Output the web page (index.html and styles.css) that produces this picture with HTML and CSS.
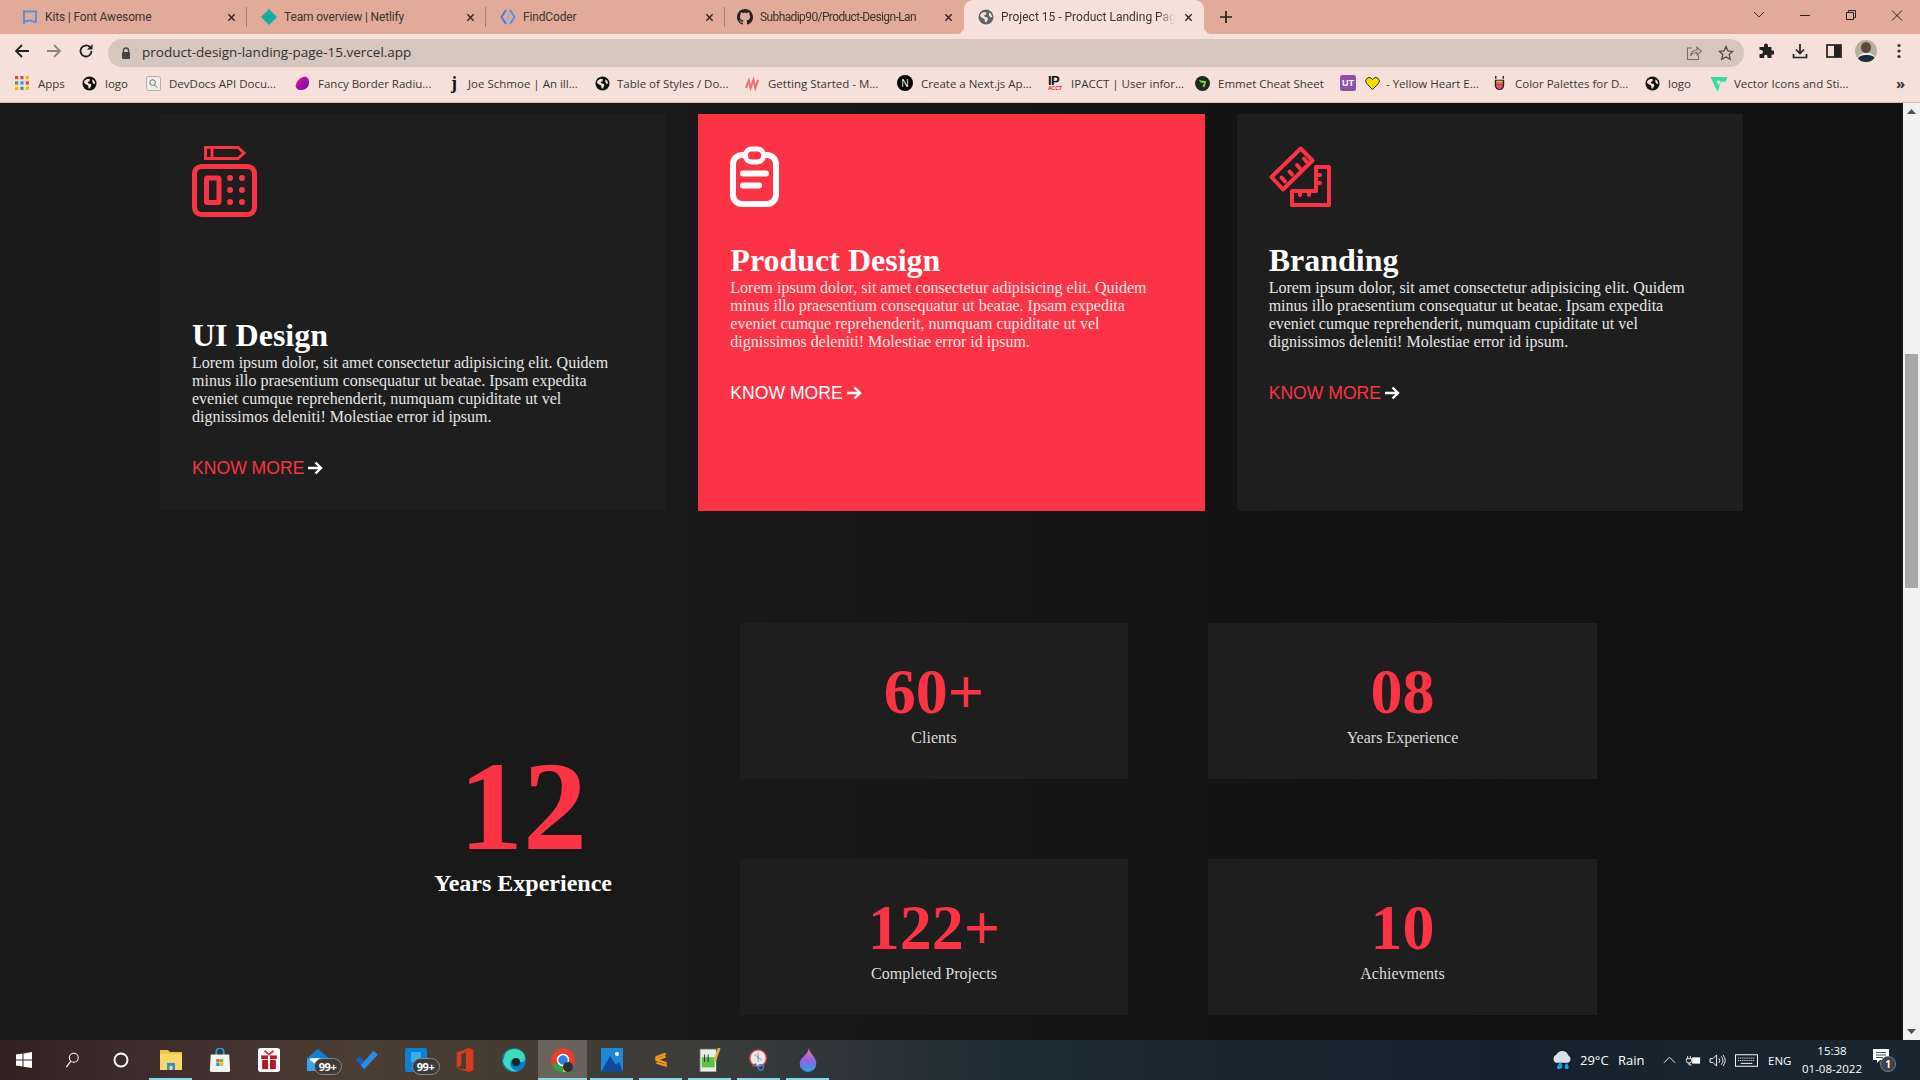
FILE: index.html
```html
<!DOCTYPE html>
<html lang="en">
<head>
<meta charset="utf-8">
<title>Project 15 - Product Landing Page</title>
<link rel="stylesheet" href="styles.css">
</head>
<body>
<svg class="defs" width="0" height="0" aria-hidden="true">
  <symbol id="globe" viewBox="0 0 16 16">
    <circle cx="8" cy="8" r="7.5" fill="currentColor"/>
    <path d="M3 4.500 6 3l2.500.5-.5 2-2 1 1 1.500 2.500.5.5 2-2 3-1-.5-.5-3L3.500 8.500 2 7z" fill="#f5e1da"/>
    <path d="M11 3.500l2 1.500 1.200 3-1.700.5-1.500-2z" fill="#f5e1da"/>
  </symbol>
  <symbol id="close" viewBox="0 0 10 10">
    <path d="M1.500 1.500l7 7M8.500 1.500l-7 7" stroke="currentColor" stroke-width="1.600" fill="none"/>
  </symbol>
</svg>

<header class="tabstrip">
  <div class="tab">
    <svg class="fav" viewBox="0 0 16 16"><path d="M2 1v14M2 2.500h12v10c-3 1-4-1-6-1-2.500 0-3 .8-6 1" fill="none" stroke="#5b8fd9" stroke-width="2"/></svg>
    <span class="tab-title">Kits | Font Awesome</span>
    <svg class="tab-x"><use href="#close"/></svg>
  </div>
  <div class="tab">
    <svg class="fav" viewBox="0 0 16 16"><path d="M8 0l8 8-8 8-8-8z" fill="#14ad9f"/></svg>
    <span class="tab-title">Team overview | Netlify</span>
    <svg class="tab-x"><use href="#close"/></svg>
  </div>
  <div class="tab">
    <svg class="fav" viewBox="0 0 16 16"><path d="M6 1 1.500 8 6 15" fill="none" stroke="#3f7fd6" stroke-width="1.800"/><path d="M10 1l4.500 7L10 15" fill="none" stroke="#4a90e2" stroke-width="1.800"/><path d="M9.500 2 6.500 14" stroke="#7fb2ee" stroke-width="1.200"/></svg>
    <span class="tab-title">FindCoder</span>
    <svg class="tab-x"><use href="#close"/></svg>
  </div>
  <div class="tab tab-before-active">
    <svg class="fav" viewBox="0 0 16 16"><path fill="#222" d="M8 0C3.580 0 0 3.580 0 8c0 3.540 2.290 6.530 5.470 7.590.4.070.55-.17.55-.38 0-.19-.01-.82-.01-1.490-2.010.37-2.530-.49-2.690-.94-.09-.23-.48-.94-.82-1.130-.28-.15-.68-.52-.01-.53.63-.01 1.080.58 1.230.82.72 1.210 1.870.87 2.330.66.07-.52.28-.87.51-1.070-1.780-.2-3.640-.89-3.640-3.950 0-.87.31-1.590.82-2.150-.08-.2-.36-1.020.08-2.120 0 0 .67-.21 2.200.82.64-.18 1.320-.27 2-.27.68 0 1.360.09 2 .27 1.530-1.040 2.200-.82 2.200-.82.44 1.100.16 1.920.08 2.120.51.56.82 1.270.82 2.150 0 3.070-1.870 3.750-3.650 3.950.29.25.54.73.54 1.480 0 1.070-.01 1.930-.01 2.200 0 .21.15.46.55.38A8.013 8.013 0 0016 8c0-4.420-3.580-8-8-8z"/></svg>
    <span class="tab-title tab-fade tab-tight">Subhadip90/Product-Design-Lan</span>
    <svg class="tab-x"><use href="#close"/></svg>
  </div>
  <div class="tab tab-active">
    <svg class="fav fav-grey"><use href="#globe"/></svg>
    <span class="tab-title tab-fade">Project 15 - Product Landing Pag</span>
    <svg class="tab-x"><use href="#close"/></svg>
  </div>
  <svg class="newtab" viewBox="0 0 12 12"><path d="M6 0v12M0 6h12" stroke="#222" stroke-width="1.700"/></svg>
  <div class="win-controls">
    <svg class="win-btn" viewBox="0 0 46 20"><path d="M18 7l5 5 5-5" fill="none" stroke="#333" stroke-width="1"/></svg>
    <svg class="win-btn" viewBox="0 0 46 20"><path d="M18 10.500h10" stroke="#222" stroke-width="1"/></svg>
    <svg class="win-btn" viewBox="0 0 46 20"><path d="M18.500 7.500h7v7h-7zM20.500 7.500v-2h7v7h-2" fill="none" stroke="#222" stroke-width="1"/></svg>
    <svg class="win-btn" viewBox="0 0 46 20"><path d="M18 5.500l10 10M28 5.500l-10 10" stroke="#222" stroke-width="1"/></svg>
  </div>
</header>

<nav class="toolbar">
  <svg class="tool tool-back" viewBox="0 0 16 16"><path d="M15 8H2M8 2 2 8l6 6" fill="none" stroke="#222" stroke-width="1.800"/></svg>
  <svg class="tool tool-fwd" viewBox="0 0 16 16"><path d="M1 8h13M8 2l6 6-6 6" fill="none" stroke="#8f8581" stroke-width="1.800"/></svg>
  <svg class="tool tool-reload" viewBox="0 0 16 16"><path d="M13.500 8A5.500 5.500 0 1 1 11.800 4" fill="none" stroke="#222" stroke-width="1.800"/><path d="M14.500 1v5.500H9z" fill="#222"/></svg>
  <div class="omnibox">
    <svg class="lock" viewBox="0 0 10 12"><path d="M2.500 5V3.500a2.500 2.500 0 0 1 5 0V5" fill="none" stroke="#444" stroke-width="1.300"/><rect x="1" y="5" width="8" height="7" rx="1" fill="#444"/></svg>
    <span class="url">product-design-landing-page-15.vercel.app</span>
    <svg class="omni-icon omni-share" viewBox="0 0 16 16"><path d="M6 3H1.500v11.500h11V10" fill="none" stroke="#756d69" stroke-width="1.100"/><path d="M4.500 11c.5-4 3-6 6.500-6V2l4.500 4.500L11 10V7.500c-3 0-5 1-6.500 3.500z" fill="none" stroke="#756d69" stroke-width="1.100"/></svg>
    <svg class="omni-icon" viewBox="0 0 16 16"><path d="M8 1.500l2 4.400 4.700.5-3.500 3.200 1 4.700L8 11.900l-4.200 2.400 1-4.700L1.300 6.400 6 5.900z" fill="none" stroke="#4f4845" stroke-width="1.300"/></svg>
  </div>
  <svg class="tool tool-ext" viewBox="0 0 16 16"><path d="M6 2.500a2 2 0 0 1 4 0V4h3.500v3.500H15a2 2 0 0 1 0 4h-1.500V15H9.500v-1.500a1.700 1.700 0 0 0-3.400 0V15H1.500v-4H3a2 2 0 0 0 0-4H1.500V4H6z" fill="#222"/></svg>
  <svg class="tool tool-dl" viewBox="0 0 16 16"><path d="M8 1v9M4 6.500 8 10.500l4-4" fill="none" stroke="#222" stroke-width="1.700"/><path d="M1.500 11v3.500h13V11" fill="none" stroke="#222" stroke-width="1.700"/></svg>
  <svg class="tool tool-side" viewBox="0 0 16 16"><rect x="1" y="2" width="14" height="12" fill="none" stroke="#222" stroke-width="1.700"/><rect x="8" y="2" width="7" height="12" fill="#222"/></svg>
  <span class="avatar"><span class="avatar-face"></span><span class="avatar-shirt"></span></span>
  <svg class="tool tool-menu" viewBox="0 0 4 16"><circle cx="2" cy="2.500" r="1.600" fill="#333"/><circle cx="2" cy="8" r="1.600" fill="#333"/><circle cx="2" cy="13.500" r="1.600" fill="#333"/></svg>
</nav>

<nav class="bookmarks">
  <a class="bm"><svg class="bm-ic" viewBox="0 0 14 14"><g><rect x="0" y="0" width="3" height="3" fill="#e8453c"/><rect x="5" y="0" width="3" height="3" fill="#e8453c"/><rect x="10" y="0" width="3" height="3" fill="#f7b500"/><rect x="0" y="5" width="3" height="3" fill="#34a853"/><rect x="5" y="5" width="3" height="3" fill="#4285f4"/><rect x="10" y="5" width="3" height="3" fill="#e8453c"/><rect x="0" y="10" width="3" height="3" fill="#f7b500"/><rect x="5" y="10" width="3" height="3" fill="#34a853"/><rect x="10" y="10" width="3" height="3" fill="#f7b500"/></g></svg>Apps</a>
  <a class="bm"><svg class="bm-ic"><use href="#globe"/></svg>logo</a>
  <a class="bm"><svg class="bm-ic" viewBox="0 0 16 16"><rect x=".5" y=".5" width="15" height="15" rx="2" fill="#eee" stroke="#aaa"/><circle cx="7" cy="7" r="3" fill="none" stroke="#666"/><path d="M9 9.500l3 3" stroke="#666"/></svg>DevDocs API Docu...</a>
  <a class="bm"><svg class="bm-ic" viewBox="0 0 16 16"><defs><linearGradient id="fbr" x1="0" y1="0" x2="1" y2="1"><stop offset="0" stop-color="#e0109a"/><stop offset="1" stop-color="#6a0fb0"/></linearGradient></defs><path d="M9 1c4-1 6 2 6 6 0 5-4 8-8 8-5 0-7-3-6-6C2 5 5 2 9 1z" fill="url(#fbr)"/></svg>Fancy Border Radiu...</a>
  <a class="bm"><span class="bm-letter">j</span>Joe Schmoe | An ill...</a>
  <a class="bm"><svg class="bm-ic bm-ic-far"><use href="#globe"/></svg>Table of Styles / Do...</a>
  <a class="bm"><svg class="bm-ic" viewBox="0 0 16 16"><path d="M1 13 4 5l2 8 3-9 2 9 3-9" fill="none" stroke="#f36d7c" stroke-width="2.200"/></svg>Getting Started - M...</a>
  <a class="bm"><span class="bm-next">N</span>Create a Next.js Ap...</a>
  <a class="bm"><span class="bm-ip">IP<small>ACCT</small></span>IPACCT | User infor...</a>
  <a class="bm"><svg class="bm-ic" viewBox="0 0 16 16"><circle cx="8" cy="8" r="8" fill="#1b2a1f"/><path d="M4 4.500l8 1-2 7-2-2 2-3-4-.5z" fill="#8fd14f"/></svg>Emmet Cheat Sheet</a>
  <a class="bm"><span class="bm-ut">UT</span></a>
  <a class="bm"><svg class="bm-ic bm-ic-near" viewBox="0 0 16 16"><path d="M8 14.500 1.800 8a3.800 3.800 0 0 1 0-5.200 3.700 3.700 0 0 1 5.300 0L8 3.700l.9-.9a3.700 3.700 0 0 1 5.300 0 3.800 3.800 0 0 1 0 5.200z" fill="#f7e000" stroke="#222"/></svg>- Yellow Heart E...</a>
  <a class="bm"><svg class="bm-ic" viewBox="0 0 16 16"><path d="M3 4h10v6a5 5 0 0 1-10 0z" fill="#222"/><path d="M4.500 5h7v2h-7z" fill="#f5b942"/><path d="M4.500 7h7v2h-7z" fill="#f2743a"/><path d="M4.500 9h7v2c0 1.500-2 3-3.500 3S4.500 12.500 4.500 11z" fill="#e8467c"/><path d="M4 0v3M12 0v3" stroke="#222" stroke-width="1.500"/></svg>Color Palettes for D...</a>
  <a class="bm"><svg class="bm-ic"><use href="#globe"/></svg>logo</a>
  <a class="bm"><svg class="bm-ic bm-vec" viewBox="0 0 18 16"><path d="M0 1h18l-2 5h-5l-1 3-2 7h-1z" fill="#34dba0"/><path d="M6 5h5l-2 5z" fill="#f5e1da"/></svg>Vector Icons and Sti...</a>
  <a class="bm bm-more">»</a>
</nav>

<div class="viewport">
  <main class="page">
    <section class="services">
      <article class="card">
        <div class="card-icon card-icon-tall">
          <svg class="ic-ui" viewBox="0 0 65 71" fill="none" stroke="#fc3345">
            <rect x="2.500" y="20.500" width="60" height="48" rx="7" stroke-width="5"/>
            <rect x="14.500" y="32" width="12.500" height="24.500" rx="1" stroke-width="5"/>
            <path d="M13.500 1.500H46l6 5.500-6 5.500H13.500zM20 1.500v11" stroke-width="3"/>
            <g fill="#fc3345" stroke="none"><circle cx="38" cy="32" r="3"/><circle cx="50" cy="32" r="3"/><circle cx="38" cy="44" r="3"/><circle cx="50" cy="44" r="3"/><circle cx="38" cy="56" r="3"/><circle cx="50" cy="56" r="3"/></g>
          </svg>
        </div>
        <h2 class="card-title">UI Design</h2>
        <p class="card-text">Lorem ipsum dolor, sit amet consectetur adipisicing elit. Quidem minus illo praesentium consequatur ut beatae. Ipsam expedita eveniet cumque reprehenderit, numquam cupiditate ut vel dignissimos deleniti! Molestiae error id ipsum.</p>
        <a class="more"><span>KNOW MORE</span><svg class="more-arrow" viewBox="0 0 15 14"><path d="M0 7h13M7.500 1.500 13 7l-5.500 5.500" fill="none" stroke="#fff" stroke-width="2.400"/></svg></a>
      </article>
      <article class="card card-hot">
        <div class="card-icon">
          <svg class="ic-clip" viewBox="0 0 49 61" fill="none" stroke="#fff" stroke-linecap="round">
            <rect x="3" y="9" width="43" height="49" rx="9" stroke-width="6"/>
            <rect x="15.500" y="3" width="18" height="13" rx="6" stroke-width="5" fill="#fc3345"/>
            <path d="M13 27.500h23M13 39.500h16" stroke-width="6"/>
          </svg>
        </div>
        <h2 class="card-title">Product Design</h2>
        <p class="card-text">Lorem ipsum dolor, sit amet consectetur adipisicing elit. Quidem minus illo praesentium consequatur ut beatae. Ipsam expedita eveniet cumque reprehenderit, numquam cupiditate ut vel dignissimos deleniti! Molestiae error id ipsum.</p>
        <a class="more"><span>KNOW MORE</span><svg class="more-arrow" viewBox="0 0 15 14"><path d="M0 7h13M7.500 1.500 13 7l-5.500 5.500" fill="none" stroke="#fff" stroke-width="2.400"/></svg></a>
      </article>
      <article class="card">
        <div class="card-icon">
          <svg class="ic-rule" viewBox="0 0 62 61" fill="none" stroke="#fc3345" stroke-width="4" stroke-linejoin="round" stroke-linecap="round">
            <path d="M31.700 2.500 43.500 14.500 14 43.500 2.500 31z"/>
            <path d="M12.500 31.500l3.500 4M20.500 25.500l2.500 3M28 19l3.500 4M35 12.500l2.500 3"/>
            <path d="M47 21h13v38H23V45h24z"/>
            <path d="M47 29h4M47 37h4M31 45v4M40 45v4"/>
          </svg>
        </div>
        <h2 class="card-title">Branding</h2>
        <p class="card-text">Lorem ipsum dolor, sit amet consectetur adipisicing elit. Quidem minus illo praesentium consequatur ut beatae. Ipsam expedita eveniet cumque reprehenderit, numquam cupiditate ut vel dignissimos deleniti! Molestiae error id ipsum.</p>
        <a class="more"><span>KNOW MORE</span><svg class="more-arrow" viewBox="0 0 15 14"><path d="M0 7h13M7.500 1.500 13 7l-5.500 5.500" fill="none" stroke="#fff" stroke-width="2.400"/></svg></a>
      </article>
    </section>

    <section class="stats">
      <div class="hero-stat">
        <div class="hero-num">12</div>
        <div class="hero-label">Years Experience</div>
      </div>
      <div class="stat-grid">
        <div class="stat"><div class="stat-num">60+</div><div class="stat-label">Clients</div></div>
        <div class="stat"><div class="stat-num">08</div><div class="stat-label">Years Experience</div></div>
        <div class="stat"><div class="stat-num">122+</div><div class="stat-label">Completed Projects</div></div>
        <div class="stat"><div class="stat-num">10</div><div class="stat-label">Achievments</div></div>
      </div>
    </section>
  </main>
  <aside class="scrollbar">
    <svg class="sb-btn" viewBox="0 0 17 17"><path d="M8.500 6 13 11H4z" fill="#505050"/></svg>
    <div class="sb-track"><div class="sb-thumb"></div></div>
    <svg class="sb-btn" viewBox="0 0 17 17"><path d="M8.500 11 13 6H4z" fill="#505050"/></svg>
  </aside>
</div>

<footer class="taskbar">
  <div class="task-left">
    <span class="tb tb-sys"><svg class="tb-ic" viewBox="0 0 16 16"><path d="M0 2.500 6.500 1.600v6H0zM7.500 1.400 16 0v7.600H7.500zM0 8.500h6.500v6L0 13.600zM7.500 8.500H16V16l-8.500-1.300z" fill="#fff"/></svg></span>
    <span class="tb tb-sys"><svg class="tb-ic" viewBox="0 0 16 18"><circle cx="10" cy="6.500" r="5" fill="none" stroke="#fff" stroke-width="1.200"/><path d="M6.500 10.500 1.500 17" stroke="#fff" stroke-width="1.300"/></svg></span>
    <span class="tb tb-cortana"><svg class="tb-ic" viewBox="0 0 16 16"><circle cx="8" cy="8" r="6.500" fill="none" stroke="#fff" stroke-width="2"/></svg></span>
    <span class="tb tb-on"><svg class="tb-ic tb-lg" viewBox="0 0 22 24"><path d="M0 2h8l2 2h12v18H0z" fill="#f6c445"/><path d="M0 6h22v16H0z" fill="#fbd768"/><path d="M7 22v-7h8v7h-2.500v-4h-3v4z" fill="#2d8fd5"/></svg></span>
    <span class="tb"><svg class="tb-ic tb-lg" viewBox="0 0 22 26"><path d="M7 8V4a4 4 0 0 1 8 0v4" fill="none" stroke="#1aa4e0" stroke-width="2"/><path d="M1 7h20l1 17a2 2 0 0 1-2 2H2a2 2 0 0 1-2-2z" fill="#f4f4f4"/><rect x="7" y="12" width="3.500" height="3.500" fill="#f25022"/><rect x="11" y="12" width="3.500" height="3.500" fill="#7fba00"/><rect x="7" y="16" width="3.500" height="3.500" fill="#00a4ef"/><rect x="11" y="16" width="3.500" height="3.500" fill="#ffb900"/></svg></span>
    <span class="tb"><svg class="tb-ic tb-lg" viewBox="0 0 24 26"><rect width="24" height="26" rx="3" fill="#fff"/><rect x="3.500" y="8" width="17" height="4" fill="#b51a22"/><rect x="4.500" y="13" width="15" height="10" fill="#b51a22"/><path d="M11 8h2v15h-2z" fill="#fff"/><path d="M12 7 7 3M12 7l5-4" stroke="#d9323c" stroke-width="2"/></svg></span>
    <span class="tb"><span class="badged"><svg class="tb-ic tb-lg" viewBox="0 0 24 24"><path d="M0 10 12 0l12 10v14H0z" fill="#0f7fd6"/><path d="M3 10h18v8H3z" fill="#fff"/><path d="M0 10l12 8 12-8v14H0z" fill="#35a6ee"/></svg><span class="count">99+</span></span></span>
    <span class="tb"><svg class="tb-ic tb-lg" viewBox="0 0 24 20"><path d="M0 10l4-4 5 5-4 5z" fill="#195abd"/><path d="M5 16 19 0l5 4L9 20z" fill="#2b8be8"/></svg></span>
    <span class="tb"><span class="badged"><svg class="tb-ic tb-lg" viewBox="0 0 22 24"><rect width="22" height="24" rx="2" fill="#0f7fd6"/><rect x="6" y="4" width="10" height="10" fill="#38aef0"/></svg><span class="count">99+</span></span></span>
    <span class="tb"><svg class="tb-ic tb-lg" viewBox="0 0 18 26"><path d="M0 5 13 0l5 2v22l-5 2-13-4 10 1V4L5 7v12l-5 3z" fill="#d83b20"/></svg></span>
    <span class="tb"><svg class="tb-ic tb-xl" viewBox="0 0 24 24"><circle cx="12" cy="12" r="12" fill="#0c7cc8"/><path d="M3 6c4-6 14-7 19 0 2 4 1 8-2 8-4 0-3-3-7-3-5 0-6 5-3 9 1 2 4 3 7 3-7 2-15-3-16-10z" fill="#3ddbb8"/><circle cx="14" cy="14" r="4" fill="#15252c"/></svg></span>
    <span class="tb tb-run"><svg class="tb-ic tb-xl" viewBox="0 0 24 24"><circle cx="12" cy="12" r="12" fill="#e5402f"/><path d="M12 12 1.500 18A12 12 0 0 0 12 24z" fill="#2aa84e"/><path d="M12 12l10.400 6A12 12 0 0 1 12 24z" fill="#f7c53f"/><circle cx="12" cy="12" r="5.500" fill="#2f7ee3" stroke="#fff" stroke-width="1.500"/><circle cx="17" cy="19" r="5" fill="#2c3035"/></svg></span>
    <span class="tb tb-on"><svg class="tb-ic tb-lg" viewBox="0 0 22 24"><rect width="22" height="24" fill="#1d88d8"/><path d="M0 24 9 8l6 9 3-3 4 10z" fill="#114a9a"/><circle cx="16" cy="6" r="2" fill="#fff"/></svg></span>
    <span class="tb tb-on"><svg class="tb-ic tb-lg" viewBox="0 0 24 24"><rect width="24" height="24" rx="3" fill="#3d3d3d"/><path d="M17 5 7 9v3l10 3v3L7 15M7 12l10-4" fill="none" stroke="#f79a0f" stroke-width="2.500"/></svg></span>
    <span class="tb tb-on"><svg class="tb-ic tb-lg" viewBox="0 0 22 26"><rect y="1" width="18" height="25" fill="#e9efe5" stroke="#555"/><rect x="2" y="10" width="14" height="11" fill="#5cc04b"/><path d="M5 7v8M9 7v8" stroke="#222"/><path d="M21 0l-5 14" stroke="#e0b048" stroke-width="3"/></svg></span>
    <span class="tb tb-on"><svg class="tb-ic tb-lg" viewBox="0 0 24 24"><circle cx="11" cy="10" r="9" fill="#e9e9e9" stroke="#d9424a" stroke-width="1.500"/><path d="M11 4v10M7 6l8 6" stroke="#889"/><circle cx="14" cy="20" r="3" fill="none" stroke="#2b8be8" stroke-width="1.500"/><path d="M5 19l4-3" stroke="#666" stroke-width="2"/></svg></span>
    <span class="tb tb-on"><svg class="tb-ic tb-lg" viewBox="0 0 18 26"><defs><linearGradient id="drop" x1="0" y1="0" x2="0" y2="1"><stop offset="0" stop-color="#f27ca0"/><stop offset=".5" stop-color="#9b5de5"/><stop offset="1" stop-color="#1ea7e8"/></linearGradient></defs><path d="M10 0c1 6 8 10 8 17a9 9 0 0 1-18 0C0 10 9 8 10 0z" fill="url(#drop)"/></svg></span>
  </div>
  <div class="tray">
    <svg class="tr-weather" viewBox="0 0 24 22"><path d="M5 14a5 5 0 0 1 1-9 7 7 0 0 1 13 1 4.500 4.500 0 0 1 0 8z" fill="#d7e3ea"/><path d="M8 21c-2 0-2-3 0-5l2-3 2 3c1 3 0 5-4 5zM17 21c-2 0-3-2-1-5l1-2 2 3c1 3 0 4-2 4z" fill="#1f9fe8"/></svg>
    <span class="tr-text">29°C</span>
    <span class="tr-text">Rain</span>
    <svg class="tr-ic" viewBox="0 0 14 8"><path d="M1 7l6-6 6 6" fill="none" stroke="#fff"/></svg>
    <svg class="tr-ic tr-bat" viewBox="0 0 18 12"><path d="M3 1v3M6 1v3M1.500 4h6v2a3 3 0 0 1-6 0zM4.500 8v3h3" fill="none" stroke="#fff"/><rect x="8" y="2.500" width="9" height="7" fill="#fff"/></svg>
    <svg class="tr-ic tr-vol" viewBox="0 0 18 14"><path d="M1 5h3l4-4v12L4 9H1z" fill="none" stroke="#fff"/><path d="M10.500 4.500a4 4 0 0 1 0 5M13 2.500a7 7 0 0 1 0 9M15 1a10 10 0 0 1 0 12" fill="none" stroke="#fff"/></svg>
    <svg class="tr-ic tr-kb" viewBox="0 0 24 13"><rect x=".5" y=".5" width="23" height="12" fill="none" stroke="#fff"/><path d="M3 4h18M3 6.500h18" stroke="#fff" stroke-dasharray="1 1"/><path d="M6 9.500h12" stroke="#fff"/></svg>
    <span class="tr-text tr-eng">ENG</span>
    <div class="clock"><span>15:38</span><span>01-08-2022</span></div>
    <span class="notif"><svg class="notif-ic" viewBox="0 0 16 15"><path d="M0 0h16v11H7l-3 3v-3H0z" fill="#fff"/><path d="M3 3.500h10M3 6h10M3 8.500h7" stroke="#1a2733" stroke-width=".8"/></svg><span class="notif-count">1</span></span>
  </div>
</footer>
</body>
</html>
```
FILE: styles.css
```css
* { box-sizing: border-box; }
html, body { height: 100%; }
body {
  margin: 0;
  display: flex;
  flex-direction: column;
  overflow: hidden;
  font-family: "Liberation Serif", serif;
  background: #181818;
}
.defs { position: absolute; }

/* browser chrome */
.tabstrip {
  height: 34px;
  flex: none;
  display: flex;
  padding-left: 8px;
  background: #e2aa98;
  font: 12px/34px Roboto, sans-serif;
  color: #3a3532;
}
.tab {
  position: relative;
  width: 239px;
  height: 34px;
  display: flex;
  align-items: center;
  padding: 0 11px 0 14px;
}
.tab::after {
  content: "";
  position: absolute;
  right: 0;
  top: 7px;
  bottom: 7px;
  width: 1px;
  background: #a5806f;
}
.tab-before-active { padding-left: 12px; }
.tab-before-active::after, .tab-active::after { display: none; }
.tab-active {
  width: 240px;
  background: #f5e1da;
  border-radius: 9px 9px 0 0;
}
.tab-active::before {
  content: "";
  position: absolute;
  left: -8px;
  right: -8px;
  bottom: 0;
  height: 8px;
  background:
    radial-gradient(circle at 0 0, transparent 8px, #f5e1da 8.5px) 0 0 / 8px 8px no-repeat,
    radial-gradient(circle at 100% 0, transparent 8px, #f5e1da 8.5px) 100% 0 / 8px 8px no-repeat;
}
.fav { width: 16px; height: 16px; flex: none; margin-right: 7px; }
.fav-grey { color: #5f6368; }
.tab-title {
  flex: 1;
  min-width: 0;
  white-space: nowrap;
  letter-spacing: -.15px;
}
.tab-fade {
  letter-spacing: 0;
  -webkit-mask-image: linear-gradient(90deg, #000 90%, transparent);
  mask-image: linear-gradient(90deg, #000 90%, transparent);
}
.tab-tight { letter-spacing: -.6px; }
.tab-x { width: 9px; height: 9px; flex: none; margin-left: 9px; color: #2a2a2a; }
.newtab { width: 12px; height: 12px; margin: 11px 0 0 16px; flex: none; }
.win-controls { margin-left: auto; display: flex; align-items: flex-start; padding: 5px 0 0; }
.win-btn { width: 46px; height: 20px; }

.toolbar {
  height: 34px;
  flex: none;
  display: flex;
  align-items: center;
  background: #f5e1da;
}
.tool { width: 16px; height: 16px; flex: none; }
.tool-back { margin-left: 14px; }
.tool-fwd { margin-left: 16px; }
.tool-reload { margin-left: 16px; }
.omnibox {
  width: 1636px;
  height: 28px;
  margin: 4px 0 0 14px;
  flex: none;
  display: flex;
  align-items: center;
  padding: 0 10px 0 13px;
  border-radius: 14px;
  background: #d6c6be;
}
.lock { width: 10px; height: 12px; flex: none; }
.url {
  margin: -2px 0 0 11px;
  font: 13.500px "Open Sans", sans-serif;
  color: #33302e;
}
.omni-icon { width: 16px; height: 16px; margin-left: 16px; flex: none; }
.omni-share { margin-left: auto; }
.tool-ext { margin-left: 14px; }
.tool-dl { margin-left: 18px; }
.tool-side { margin-left: 18px; }
.avatar {
  position: relative;
  width: 22px;
  height: 22px;
  margin-left: 13px;
  border-radius: 50%;
  overflow: hidden;
  flex: none;
  background: #b5b09b;
}
.avatar-face { position: absolute; left: 6px; top: 2px; width: 10px; height: 11px; border-radius: 50%; background: #5d4a3d; }
.avatar-shirt { position: absolute; left: 2px; top: 13px; width: 19px; height: 10px; border-radius: 8px 8px 0 0; background: #1e2b3a; border-top: 2px solid #e8eef2; }
.tool-menu { width: 4px; margin-left: 20px; }

.bookmarks {
  height: 35px;
  flex: none;
  display: grid;
  grid-template-columns: 67px 64px 149px 156px 144px 150px 152px 151px 147px 145px 25px 127px 153px 65px 186px 20px;
  align-items: center;
  padding: 0 0 4px 15px;
  background: #f5e1da;
  border-bottom: 1px solid #cdbfb8;
  font: 11.500px "Open Sans", sans-serif;
  color: #3a3532;
  white-space: nowrap;
}
.bm { display: flex; align-items: center; color: #3a3532; }
.bm-ic { width: 15px; height: 15px; flex: none; margin-right: 8px; color: #111; }
.bm-ic-far { margin-right: 7px; }
.bm-ic-near { margin-right: 6px; }
.bm-vec { width: 18px; margin-right: 6px; }
.bm-letter {
  width: 17px;
  flex: none;
  font: bold 18px "Liberation Serif", serif;
  color: #111;
  line-height: 15px;
}
.bm-next {
  width: 16px;
  height: 16px;
  margin-right: 8px;
  flex: none;
  border-radius: 50%;
  background: #000;
  color: #fff;
  font-size: 10px;
  line-height: 16px;
  text-align: center;
}
.bm-ip {
  width: 16px;
  margin-right: 7px;
  flex: none;
  font: bold 13px/10px "Liberation Sans", sans-serif;
  color: #111;
  letter-spacing: -.5px;
}
.bm-ip small { display: block; font-size: 5px; line-height: 5px; color: #d8202c; letter-spacing: 0; }
.bm-ut {
  width: 16px;
  height: 16px;
  border-radius: 2px;
  background: #8c52a6;
  color: #fff;
  font: bold 9px/16px "Liberation Sans", sans-serif;
  text-align: center;
}
.bm-more { font-size: 15px; font-weight: 700; color: #333; }

/* page */
.viewport {
  flex: 1;
  min-height: 0;
  display: flex;
  overflow: hidden;
}
.page {
  flex: 1;
  min-width: 0;
  padding-top: 11px;
  background: linear-gradient(90deg, #191919 0, #191919 35%, #111 80%, #111 100%);
  color: #fff;
}
.services {
  display: grid;
  grid-template-columns: repeat(3, 1fr);
  gap: 32px;
  padding: 0 160px;
}
.card {
  padding: 32px;
  min-height: 397px;
  background: #1e1e1e;
}
.card-hot { background: #fc3345; }
.card-icon { height: 96px; }
.card-icon-tall { height: 171px; }
.card-icon svg { display: block; }
.ic-ui { width: 65px; height: 71px; }
.ic-clip { width: 49px; height: 61px; }
.ic-rule { width: 62px; height: 61px; }
.card-title {
  margin: 0;
  font-size: 32px;
  font-weight: 700;
  line-height: 37px;
  color: #fff;
}
.card-text {
  margin: 0;
  font-size: 16px;
  line-height: 18px;
  color: #e6e6e6;
}
.card-hot .card-text { color: #f6e9ea; }
.more {
  display: flex;
  align-items: center;
  margin-top: 32px;
  font: 17.600px/20px "Liberation Sans", sans-serif;
  color: #fc3345;
}
.card-hot .more { color: #fff; }
.more-arrow { width: 15px; height: 14px; margin-left: 4px; }

.stats {
  display: flex;
  align-items: center;
  margin-top: 112px;
  padding-left: 306px;
}
.hero-stat { width: 434px; text-align: center; }
.hero-num {
  font-size: 128px;
  font-weight: 700;
  line-height: 128px;
  color: #fc3345;
}
.hero-label {
  margin-top: -1px;
  font-size: 24px;
  font-weight: 700;
  line-height: 28px;
  color: #fff;
}
.stat-grid {
  display: grid;
  grid-template-columns: 388px 389px;
  grid-auto-rows: 156px;
  gap: 80px;
}
.stat {
  padding-top: 33px;
  text-align: center;
  background: #1e1e1e;
}
.stat-num {
  font-size: 64px;
  font-weight: 700;
  line-height: 71px;
  color: #fc3345;
}
.stat-label {
  margin-top: 2px;
  font-size: 16px;
  line-height: 18px;
  color: #dcdcdc;
}

/* scrollbar */
.scrollbar {
  width: 17px;
  flex: none;
  display: flex;
  flex-direction: column;
  background: #f1f1f1;
}
.sb-btn { width: 17px; height: 17px; flex: none; }
.sb-track { flex: 1; padding: 234px 2px 0; }
.sb-thumb { height: 234px; background: #a8a8a8; }

/* taskbar */
.taskbar {
  height: 40px;
  flex: none;
  display: flex;
  justify-content: space-between;
  background: linear-gradient(90deg, #33211f 0, #3d2a2c 120px, #4b3d33 350px, #453c31 520px, #3a3c3a 720px, #1e2c36 1000px, #15212c 1500px, #1a2630 100%);
  color: #fff;
}
.task-left { display: flex; }
.tb {
  position: relative;
  width: 49px;
  height: 40px;
  display: flex;
  align-items: center;
  justify-content: center;
}
.tb-sys { width: 48px; }
.tb-cortana { width: 50px; }
.tb-on::after, .tb-run::after {
  content: "";
  position: absolute;
  left: 3px;
  right: 3px;
  bottom: 0;
  height: 2px;
  background: #7fdde8;
}
.tb-run { background: rgba(255,255,255,.2); }
.tb-run::after { left: 0; right: 0; }
.tb-ic { width: 16px; height: 16px; display: block; }
.tb-lg { width: 22px; height: 24px; }
.tb-xl { width: 24px; height: 24px; }
.badged { position: relative; display: block; }
.count {
  position: absolute;
  left: 7px;
  top: 10px;
  width: 28px;
  height: 17px;
  border: 1px solid #8a8a8a;
  border-radius: 9px;
  background: #3b3b3b;
  font: 700 11px/15px "Open Sans", sans-serif;
  text-align: center;
  letter-spacing: -.4px;
  color: #fff;
}
.tray {
  display: grid;
  grid-template-columns: 24px 38px 49px 22px 24px 26px 23px 46px 56px 50px;
  align-items: center;
  justify-items: start;
  width: 368px;
  font: 13px "Open Sans", sans-serif;
}
.tr-weather { width: 22px; height: 20px; margin-left: -1px; }
.tr-ic { width: 13px; height: 8px; }
.tr-bat { width: 16px; height: 11px; }
.tr-vol { width: 17px; height: 13px; }
.tr-kb { width: 23px; height: 13px; }
.tr-text { white-space: nowrap; margin-left: 4px; }
.tr-eng { margin-left: 10px; font-size: 11.500px; }
.clock {
  display: flex;
  flex-direction: column;
  align-items: center;
  justify-self: center;
  white-space: nowrap;
  font-size: 11.500px;
  line-height: 18px;
}
.notif { position: relative; display: block; width: 22px; height: 22px; margin-left: 13px; }
.notif-ic { width: 16px; height: 15px; display: block; }
.notif-count {
  position: absolute;
  left: 7px;
  top: 7px;
  width: 16px;
  height: 16px;
  border-radius: 50%;
  background: #3c4248;
  border: 1px solid #7a8086;
  font: 700 10px/14px "Open Sans", sans-serif;
  text-align: center;
}
```
